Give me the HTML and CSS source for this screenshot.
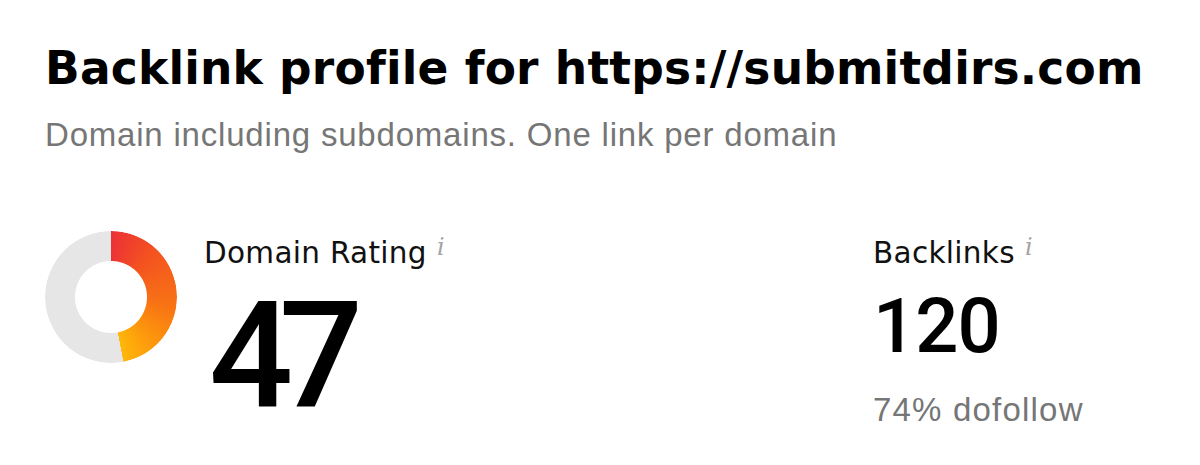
FILE: index.html
```html
<!DOCTYPE html>
<html lang="en">
<head>
<meta charset="utf-8">
<title>Backlink profile</title>
<link rel="stylesheet" href="styles.css">
</head>
<body>
<main class="page">
  <h1 class="title">Backlink profile for https://submitdirs.com</h1>
  <p class="subtitle">Domain including subdomains. One link per domain</p>
  <section class="stats">
    <div class="dr">
      <div class="donut" aria-hidden="true"></div>
      <div class="metric">
        <div class="label">Domain Rating<span class="info">i</span></div>
        <div class="big-number">47</div>
      </div>
    </div>
    <div class="metric backlinks">
      <div class="label">Backlinks<span class="info">i</span></div>
      <div class="mid-number">120</div>
      <div class="note">74% dofollow</div>
    </div>
  </section>
</main>
</body>
</html>
```
FILE: styles.css
```css
* { box-sizing: border-box; }
html, body { margin: 0; padding: 0; background: #fff; }
body { width: 1200px; height: 465px; overflow: hidden; }

.page {
  padding: 45px 0 0 45px;
}

.title {
  margin: 0;
  font-family: "DejaVu Sans", sans-serif;
  font-weight: 700;
  font-size: 45.5px;
  line-height: 48px;
  color: #000;
  letter-spacing: 0.2px;
  white-space: nowrap;
}

.subtitle {
  margin: 25px 0 0;
  font-family: "Liberation Sans", Arial, sans-serif;
  font-size: 33px;
  line-height: 33px;
  color: #767676;
  letter-spacing: 0.8px;
  white-space: nowrap;
}

.stats {
  display: flex;
  margin-top: 80px;
}

.dr {
  display: flex;
  flex: 1;
  gap: 27px;
}

.donut {
  width: 132px;
  height: 132px;
  border-radius: 50%;
  flex: none;
  background: conic-gradient(from 0deg, #ec3136 0deg, #f4541f 45deg, #f87414 100deg, #fd9a0c 140deg, #ffb70a 169deg, #e6e6e6 169.3deg, #e6e6e6 360deg);
  -webkit-mask: radial-gradient(circle at center, transparent 35.5px, #000 36.5px);
  mask: radial-gradient(circle at center, transparent 35.5px, #000 36.5px);
}

.metric {
  padding-top: 7px;
}

.label {
  font-family: "DejaVu Sans", sans-serif;
  font-size: 29.5px;
  line-height: 30px;
  color: #111;
  letter-spacing: 0.3px;
  white-space: nowrap;
}

.info {
  display: inline-block;
  margin-left: 10px;
  font-family: "DejaVu Serif", serif;
  font-style: italic;
  font-size: 24px;
  line-height: 24px;
  color: #a4a4a4;
  vertical-align: top;
  margin-top: -3px;
}

.big-number {
  margin: 15px 0 0 5px;
  font-family: Roboto, sans-serif;
  font-weight: 500;
  font-size: 148px;
  line-height: 148px;
  letter-spacing: -14px;
  color: #000;
}

.backlinks {
  width: 327px;
  flex: none;
}

.mid-number {
  margin-top: 20px;
  font-family: Roboto, sans-serif;
  font-weight: 500;
  font-size: 76px;
  line-height: 76px;
  letter-spacing: -1px;
  color: #000;
}

.note {
  margin-top: 29px;
  font-family: "Liberation Sans", Arial, sans-serif;
  font-size: 33px;
  line-height: 33px;
  color: #767676;
  letter-spacing: 1.2px;
  white-space: nowrap;
}
```
